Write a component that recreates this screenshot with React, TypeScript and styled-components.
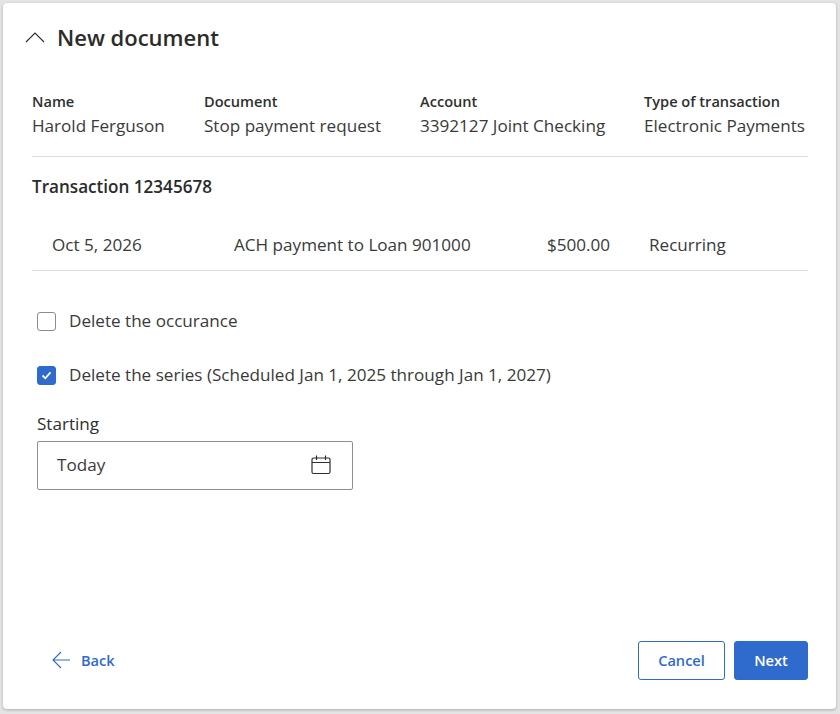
import styled, { createGlobalStyle } from "styled-components";

const GlobalStyle = createGlobalStyle`
  html, body {
    margin: 0;
    padding: 0;
    background: #e4e4e4;
    font-family: "Open Sans", "Liberation Sans", sans-serif;
    color: #2f2f2f;
  }
`;

const Page = styled.div`
  width: 840px;
  height: 714px;
  padding: 3px 4px 5px 3px;
  box-sizing: border-box;
`;

const Card = styled.div`
  height: 100%;
  box-sizing: border-box;
  background: #ffffff;
  border-radius: 4px;
  box-shadow: 0 1px 3px rgba(0, 0, 0, 0.25);
  padding: 19px 28px 29px 29px;
  display: flex;
  flex-direction: column;
`;

const Header = styled.div`
  display: flex;
  align-items: center;
  gap: 12px;
  height: 30px;
  margin-left: -7px;
`;

const Title = styled.h1`
  margin: 0;
  font-size: 22px;
  line-height: 30px;
  font-weight: 600;
  color: #2b2b2b;
`;

const MetaGrid = styled.div`
  display: grid;
  grid-template-columns: 172px 216px 224px 1fr;
  margin-top: 39px;
  padding-bottom: 18px;
  border-bottom: 1px solid #dcdcdc;
`;

const MetaLabel = styled.div`
  font-size: 14.6px;
  line-height: 20px;
  font-weight: 600;
  color: #2f2f2f;
`;

const MetaValue = styled.div`
  font-size: 17.1px;
  line-height: 24px;
  margin-top: 3px;
  color: #3a3a3a;
  white-space: nowrap;
`;

const SectionTitle = styled.h2`
  margin: 18px 0 0;
  font-size: 17.1px;
  line-height: 24px;
  font-weight: 600;
  color: #2b2b2b;
`;

const TxRow = styled.div`
  display: grid;
  grid-template-columns: 182px 313px 102px 1fr;
  padding: 0 0 13px 20px;
  margin-top: 34px;
  font-size: 17.1px;
  line-height: 24px;
  color: #3a3a3a;
  border-bottom: 1px solid #dcdcdc;
`;

const Options = styled.div`
  margin: 38px 0 0 5px;
  display: flex;
  flex-direction: column;
`;

const CheckRow = styled.label`
  display: flex;
  align-items: center;
  gap: 13px;
  height: 24px;
  font-size: 17.1px;
  line-height: 24px;
  color: #3a3a3a;
  margin-bottom: 30px;
  &:last-child {
    margin-bottom: 0;
  }
`;

const CheckBox = styled.span<{ $checked?: boolean }>`
  width: 19px;
  height: 19px;
  box-sizing: border-box;
  border-radius: 3px;
  border: 1px solid ${(p) => (p.$checked ? "#2f6bcd" : "#8c8c8c")};
  background: ${(p) => (p.$checked ? "#2f6bcd" : "#ffffff")};
  display: flex;
  align-items: center;
  justify-content: center;
  flex: none;
`;

const Field = styled.div`
  margin: 25px 0 0 5px;
  width: 316px;
`;

const FieldLabel = styled.div`
  font-size: 17.1px;
  line-height: 24px;
  color: #2f2f2f;
`;

const DateInput = styled.div`
  margin-top: 5px;
  height: 49px;
  box-sizing: border-box;
  border: 1px solid #8f8f8f;
  border-radius: 2px;
  display: flex;
  align-items: center;
  justify-content: space-between;
  padding: 0 21px 2px 19px;
  font-size: 17.1px;
  color: #3a3a3a;
`;

const Footer = styled.div`
  margin-top: auto;
  display: flex;
  align-items: center;
  justify-content: space-between;
`;

const BackLink = styled.a`
  display: flex;
  align-items: center;
  gap: 11px;
  margin-left: 20px;
  padding-bottom: 1px;
  font-size: 14.6px;
  font-weight: 600;
  color: #2f6bcd;
`;

const Actions = styled.div`
  display: flex;
  gap: 9px;
`;

const Button = styled.button<{ $primary?: boolean }>`
  height: 39px;
  box-sizing: border-box;
  padding: 0 0 1px;
  width: ${(p) => (p.$primary ? "74px" : "87px")};
  border: 1px solid #2f6bcd;
  border-radius: 3px;
  background: ${(p) => (p.$primary ? "#2f6bcd" : "#ffffff")};
  color: ${(p) => (p.$primary ? "#ffffff" : "#2f6bcd")};
  font-family: inherit;
  font-size: 14.6px;
  font-weight: 600;
`;

export default function App() {
  return (
    <Page>
      <GlobalStyle />
      <Card>
        <Header>
          <svg width="20" height="12" viewBox="0 0 20 12" fill="none" stroke="#2b2b2b" strokeWidth="1.1">
            <path d="M1 11L10 2l9 9" />
          </svg>
          <Title>New document</Title>
        </Header>

        <MetaGrid>
          <div>
            <MetaLabel>Name</MetaLabel>
            <MetaValue>Harold Ferguson</MetaValue>
          </div>
          <div>
            <MetaLabel>Document</MetaLabel>
            <MetaValue>Stop payment request</MetaValue>
          </div>
          <div>
            <MetaLabel>Account</MetaLabel>
            <MetaValue>3392127 Joint Checking</MetaValue>
          </div>
          <div>
            <MetaLabel>Type of transaction</MetaLabel>
            <MetaValue>Electronic Payments</MetaValue>
          </div>
        </MetaGrid>

        <SectionTitle>Transaction 12345678</SectionTitle>
        <TxRow>
          <span>Oct 5, 2026</span>
          <span>ACH payment to Loan 901000</span>
          <span>$500.00</span>
          <span>Recurring</span>
        </TxRow>

        <Options>
          <CheckRow>
            <CheckBox />
            Delete the occurance
          </CheckRow>
          <CheckRow>
            <CheckBox $checked>
              <svg width="11" height="9" viewBox="0 0 11 9" fill="none" stroke="#ffffff" strokeWidth="1.8">
                <path d="M1.5 4.5l2.8 2.8 5.2-6" />
              </svg>
            </CheckBox>
            Delete the series (Scheduled Jan 1, 2025 through Jan 1, 2027)
          </CheckRow>
        </Options>

        <Field>
          <FieldLabel>Starting</FieldLabel>
          <DateInput>
            Today
            <svg width="20" height="20" viewBox="0 0 20 20" fill="none" stroke="#2f2f2f" strokeWidth="1.2">
              <rect x="1" y="3" width="18" height="15.5" rx="1.5" />
              <path d="M1 7.5h18M5.5 0.5v4.5M14.5 0.5v4.5" />
            </svg>
          </DateInput>
        </Field>

        <Footer>
          <BackLink>
            <svg width="18" height="18" viewBox="0 0 18 18" fill="none" stroke="#2f6bcd" strokeWidth="1.1">
              <path d="M18 9H1M9 1L1 9l8 8" />
            </svg>
            Back
          </BackLink>
          <Actions>
            <Button>Cancel</Button>
            <Button $primary>Next</Button>
          </Actions>
        </Footer>
      </Card>
    </Page>
  );
}
